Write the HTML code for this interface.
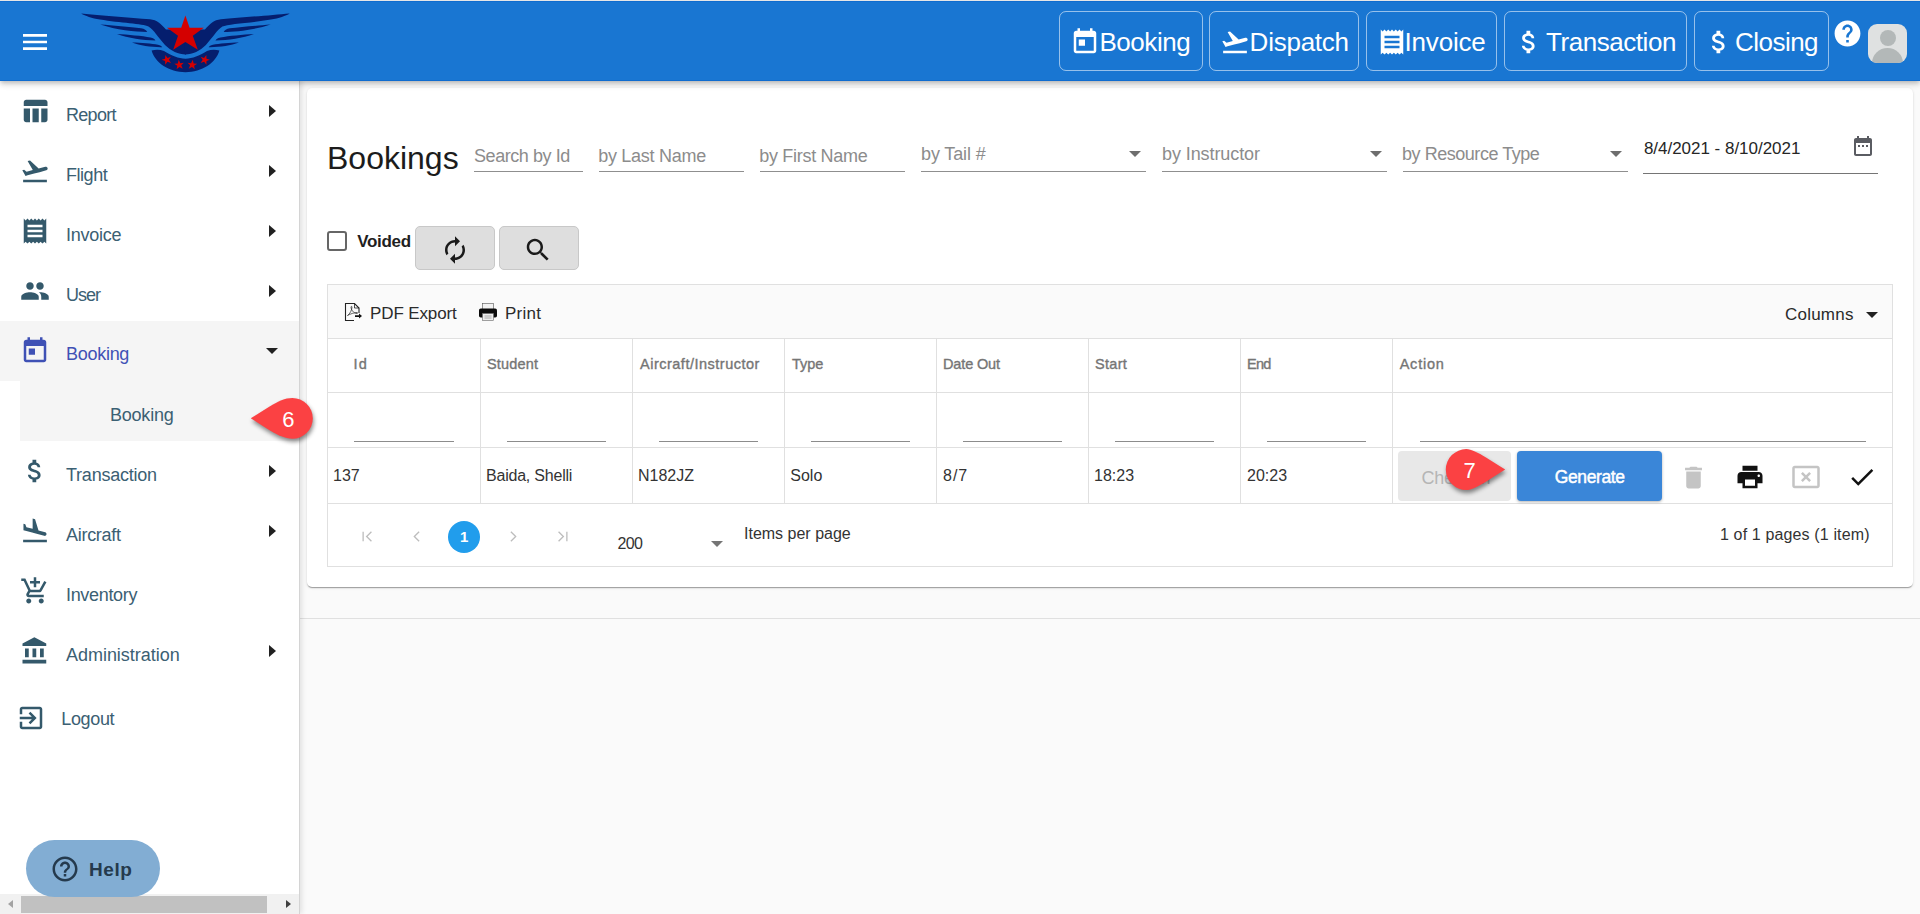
<!DOCTYPE html>
<html lang="en">
<head>
<meta charset="utf-8">
<title>Bookings</title>
<style>
*{box-sizing:border-box;margin:0;padding:0}
html,body{width:1920px;height:914px;overflow:hidden;background:#fafafa;font-family:"Liberation Sans",sans-serif;color:#212121}
.abs{position:absolute}
.t{position:absolute;white-space:nowrap;line-height:1}
svg{position:absolute;display:block;overflow:visible}
/* header */
#hdr{position:absolute;left:0;top:0;width:1920px;height:81px;background:#1976d2;border-top:1px solid #e6e6e6;box-shadow:0 2px 4px -1px rgba(0,0,0,.16),0 4px 5px 0 rgba(0,0,0,.10),0 1px 10px 0 rgba(0,0,0,.09);z-index:5}
.nb{position:absolute;top:11px;height:60px;border:1px solid rgba(255,255,255,.55);border-radius:7px}
.nb .t{color:#fff;font-size:26px;top:17px}
/* sidebar */
#side{position:absolute;left:0;top:80px;width:300px;height:834px;background:#fff;border-right:1px solid #d4d4d4;box-shadow:2px 0 5px rgba(0,0,0,.10);z-index:2}
.mi{position:absolute;left:0;width:299px;height:60px}
.mi .t{left:66px;top:22px;font-size:18px;color:#3b6073}
.mi svg.ic{left:20px;top:12px;width:30px;height:30px;fill:#34596b}
.mi .ar{position:absolute;left:269px;top:21px;width:0;height:0;border-left:7px solid #212121;border-top:6px solid transparent;border-bottom:6px solid transparent}
/* card */
#card{position:absolute;left:307px;top:88px;width:1606px;height:499px;background:#fff;border-radius:5px;box-shadow:0 2px 1px -1px rgba(0,0,0,.2),0 1px 1px 0 rgba(0,0,0,.14),0 1px 3px 0 rgba(0,0,0,.12)}
.ph{color:#8c8c8c;font-size:18px}
.ul{position:absolute;height:1px;background:#8f8f8f}
.dd{position:absolute;width:0;height:0;border-top:6px solid #6e6e6e;border-left:6px solid transparent;border-right:6px solid transparent}
</style>
</head>
<body>
<!-- HEADER -->
<div id="hdr"><div class="abs" style="left:0;top:-1px;width:1920px;height:81px"><div class="abs" style="left:0;top:1px;width:1920px;height:1px;background:#0f6ccf"></div><div class="abs" style="left:0;top:80px;width:1920px;height:1px;background:#0f6ccf"></div>
  <svg style="left:19px;top:26px" width="32" height="32" viewBox="0 0 24 24" fill="#fff"><path d="M3 18h18v-2H3v2zm0-5h18v-2H3v2zm0-7v2h18V6H3z"/></svg>
  <svg style="left:0;top:0" width="300" height="80" viewBox="0 0 300 80">
    <g fill="#051e6e">
      <path d="M81.2 13.4 C100 15.2 130 17.6 150 19.2 C157 19.8 161 24 166 29.5 L186 29.5 L186 54.600 C178 54.2 171 51 165 45 C158 37.5 154 30 148.5 26.6 C143 23.8 120 23 100 19.6 C92 18 85 15.8 81.2 13.4Z"/>
      <path d="M100.3 24.5 C112 25.4 130 27 141 28.2 C144.5 28.8 146.5 30.4 147.2 32 C135 31.8 116 29.8 100.3 24.5Z"/>
      <path d="M117 34 C128 34.6 142 36 150.5 37.4 C153.4 38 154.8 39.2 155.4 40.4 C143 40.4 128 38.2 117 34Z"/>
      <path d="M132 42.6 C141 42.8 152 43.8 158 44.8 C160.4 45.4 161.6 46.2 162.2 47.2 C152 47.4 140 45.6 132 42.6Z"/>
    </g>
    <g fill="#051e6e" transform="translate(370.9 0) scale(-1 1)">
      <path d="M81.2 13.4 C100 15.2 130 17.6 150 19.2 C157 19.8 161 24 166 29.5 L186 29.5 L186 54.600 C178 54.2 171 51 165 45 C158 37.5 154 30 148.5 26.6 C143 23.8 120 23 100 19.6 C92 18 85 15.8 81.2 13.4Z"/>
      <path d="M100.3 24.5 C112 25.4 130 27 141 28.2 C144.5 28.8 146.5 30.4 147.2 32 C135 31.8 116 29.8 100.3 24.5Z"/>
      <path d="M117 34 C128 34.6 142 36 150.5 37.4 C153.4 38 154.8 39.2 155.4 40.4 C143 40.4 128 38.2 117 34Z"/>
      <path d="M132 42.6 C141 42.8 152 43.8 158 44.8 C160.4 45.4 161.6 46.2 162.2 47.2 C152 47.4 140 45.6 132 42.6Z"/>
    </g>
    <path fill="#051e6e" d="M151.6 50.6 C156 49.2 160 49.6 164 51 C172 55.800 178 58.500 185.500 58.700 C193 58.500 199 55.800 207 51 C211 49.6 215 49.2 219.4 50.6 C216 63 202 72.2 185.5 72.2 C169 72.2 155 63 151.6 50.6Z"/>
    <path fill="#d40000" d="M185.4 15.6 L189.6 27.8 L203.8 27.8 L192.800 35.800 L197.800 49.800 L185.400 42 L173.200 49.800 L178 35.800 L167 27.800 L181.2 27.8Z"/>
    <g fill="#d40000">
      <path d="M0 -4.2 L1.1 -1.3 L4.1 -1.3 L1.7 .6 L2.6 3.6 L0 1.8 L-2.6 3.6 L-1.7 .6 L-4.1 -1.3 L-1.1 -1.3Z" transform="translate(166.8 59.8) rotate(-18) scale(1.18)"/>
      <path d="M0 -4.2 L1.1 -1.3 L4.1 -1.3 L1.7 .6 L2.6 3.6 L0 1.8 L-2.6 3.6 L-1.7 .6 L-4.1 -1.3 L-1.1 -1.3Z" transform="translate(179.2 64.8) rotate(-6) scale(1.18)"/>
      <path d="M0 -4.2 L1.1 -1.3 L4.1 -1.3 L1.7 .6 L2.6 3.6 L0 1.8 L-2.6 3.6 L-1.7 .6 L-4.1 -1.3 L-1.1 -1.3Z" transform="translate(192.2 64.8) rotate(6) scale(1.18)"/>
      <path d="M0 -4.2 L1.1 -1.3 L4.1 -1.3 L1.7 .6 L2.6 3.6 L0 1.8 L-2.6 3.6 L-1.7 .6 L-4.1 -1.3 L-1.1 -1.3Z" transform="translate(204.8 59.8) rotate(18) scale(1.18)"/>
    </g>
  </svg>
  <div class="nb" style="left:1059px;width:144px">
    <svg style="left:10px;top:15px" width="30" height="30" viewBox="0 0 24 24" fill="#fff"><path d="M19 3h-1V1h-2v2H8V1H6v2H5c-1.11 0-1.990.9-1.990 2L3 19c0 1.100.890 2 2 2h14c1.100 0 2-.9 2-2V5c0-1.100-.9-2-2-2zm0 16H5V8h14v11zM7 10h5v5H7z"/></svg>
    <span class="t" id="nb1" style="left:39.4px;letter-spacing:-0.43px">Booking</span></div>
  <div class="nb" style="left:1209px;width:150px">
    <svg style="left:10px;top:15px" width="30" height="30" viewBox="0 0 24 24" fill="#fff"><path d="M2.5 19h19v2h-19zm19.570-9.360c-.21-.8-1.040-1.280-1.840-1.060L14.920 10l-6.900-6.430-1.930.51 4.140 7.170-4.970 1.330-1.970-1.540-1.450.39 1.820 3.160.77 1.330 1.600-.43 5.310-1.420 4.350-1.160L21 11.490c.81-.23 1.280-1.050 1.070-1.850z"/></svg>
    <span class="t" id="nb2" style="left:39.6px;letter-spacing:-0.24px">Dispatch</span></div>
  <div class="nb" style="left:1366px;width:131px">
    <svg style="left:10px;top:15px" width="30" height="30" viewBox="0 0 24 24" fill="#fff"><path d="M18 17H6v-2h12v2zm0-4H6v-2h12v2zm0-4H6V7h12v2zM3 22l1.500-1.500L6 22l1.500-1.500L9 22l1.500-1.500L12 22l1.500-1.500L15 22l1.500-1.500L18 22l1.500-1.500L21 22V2l-1.500 1.500L18 2l-1.500 1.500L15 2l-1.500 1.500L12 2l-1.500 1.500L9 2 7.500 3.500 6 2 4.500 3.500 3 2v20z"/></svg>
    <span class="t" id="nb3" style="left:37.6px;letter-spacing:-0.21px">Invoice</span></div>
  <div class="nb" style="left:1504px;width:183px">
    <svg style="left:9.400px;top:15.200px" width="30" height="30" viewBox="0 0 24 24" fill="#fff"><path d="M11.800 10.900c-2.270-.59-3-1.200-3-2.150 0-1.090 1.010-1.850 2.700-1.850 1.780 0 2.440.85 2.500 2.100h2.210c-.07-1.720-1.120-3.300-3.210-3.810V3h-3v2.160c-1.940.42-3.500 1.680-3.500 3.610 0 2.310 1.910 3.460 4.700 4.130 2.500.6 3 1.480 3 2.410 0 .69-.49 1.790-2.700 1.790-2.060 0-2.870-.92-2.980-2.100h-2.200c.12 2.190 1.760 3.420 3.680 3.830V21h3v-2.150c1.950-.37 3.500-1.500 3.500-3.550 0-2.840-2.430-3.810-4.700-4.400z"/></svg>
    <span class="t" id="nb4" style="left:41.0px;letter-spacing:-0.45px">Transaction</span></div>
  <div class="nb" style="left:1694px;width:135px">
    <svg style="left:9.400px;top:15.200px" width="30" height="30" viewBox="0 0 24 24" fill="#fff"><path d="M11.800 10.900c-2.270-.59-3-1.200-3-2.150 0-1.090 1.010-1.850 2.700-1.850 1.780 0 2.440.85 2.500 2.100h2.210c-.07-1.720-1.120-3.300-3.210-3.810V3h-3v2.160c-1.940.42-3.500 1.680-3.500 3.610 0 2.310 1.910 3.460 4.700 4.130 2.500.6 3 1.480 3 2.410 0 .69-.49 1.790-2.700 1.790-2.060 0-2.870-.92-2.980-2.100h-2.200c.12 2.190 1.760 3.420 3.680 3.830V21h3v-2.150c1.950-.37 3.500-1.500 3.500-3.550 0-2.840-2.430-3.810-4.700-4.400z"/></svg>
    <span class="t" id="nb5" style="left:40px;letter-spacing:-0.53px">Closing</span></div>
  <svg style="left:1832.400px;top:18.400px" width="31" height="31" viewBox="0 0 24 24" fill="#fff"><path d="M12 2C6.480 2 2 6.480 2 12s4.480 10 10 10 10-4.480 10-10S17.520 2 12 2zm1 17h-2v-2h2v2zm2.070-7.750l-.9.92C13.450 12.900 13 13.500 13 15h-2v-.5c0-1.100.45-2.100 1.170-2.830l1.240-1.260c.37-.36.59-.86.59-1.410 0-1.100-.9-2-2-2s-2 .9-2 2H8c0-2.210 1.790-4 4-4s4 1.790 4 4c0 .88-.36 1.680-.93 2.250z"/></svg>
  <div class="abs" style="left:1868px;top:24px;width:39px;height:39px;border-radius:9px;background:#dfe1e1;overflow:hidden">
    <div class="abs" style="left:11.500px;top:6px;width:16px;height:16px;border-radius:50%;background:#b3b8b8"></div>
    <div class="abs" style="left:4px;top:24px;width:31px;height:30px;border-radius:50%;background:#b3b8b8"></div>
  </div>
</div></div>

<!-- SIDEBAR -->
<div id="side">
  <div class="mi" style="top:4px"><svg class="ic" viewBox="0 0 24 24"><path d="M10 10.020h5V21h-5zM17 21h3c1.100 0 2-.9 2-2v-9h-5v11zm3-18H5c-1.100 0-2 .9-2 2v3h19V5c0-1.100-.9-2-2-2zM3 19c0 1.100.9 2 2 2h3V10H3v9z"/></svg><span class="t" id="m0" style="left:66px;letter-spacing:-0.70px">Report</span><div class="ar"></div></div>
  <div class="mi" style="top:64px"><svg class="ic" viewBox="0 0 24 24"><path d="M2.5 19h19v2h-19zm19.570-9.360c-.21-.8-1.040-1.280-1.840-1.060L14.920 10l-6.900-6.430-1.930.51 4.140 7.170-4.970 1.330-1.970-1.540-1.450.39 1.820 3.160.77 1.330 1.600-.43 5.310-1.420 4.350-1.160L21 11.490c.81-.23 1.280-1.050 1.070-1.850z"/></svg><span class="t" id="m1" style="left:66px;letter-spacing:-0.46px">Flight</span><div class="ar"></div></div>
  <div class="mi" style="top:124px"><svg class="ic" viewBox="0 0 24 24"><path d="M18 17H6v-2h12v2zm0-4H6v-2h12v2zm0-4H6V7h12v2zM3 22l1.500-1.500L6 22l1.500-1.500L9 22l1.500-1.500L12 22l1.500-1.500L15 22l1.500-1.500L18 22l1.500-1.500L21 22V2l-1.500 1.500L18 2l-1.500 1.500L15 2l-1.500 1.500L12 2l-1.500 1.500L9 2 7.500 3.500 6 2 4.500 3.500 3 2v20z"/></svg><span class="t" id="m2" style="left:66px;letter-spacing:-0.27px">Invoice</span><div class="ar"></div></div>
  <div class="mi" style="top:184px"><svg class="ic" viewBox="0 0 24 24"><path d="M16 11c1.660 0 2.990-1.340 2.990-3S17.660 5 16 5c-1.660 0-3 1.340-3 3s1.340 3 3 3zm-8 0c1.660 0 2.990-1.340 2.990-3S9.660 5 8 5C6.340 5 5 6.340 5 8s1.340 3 3 3zm0 2c-2.330 0-7 1.170-7 3.500V19h14v-2.500c0-2.330-4.670-3.500-7-3.500zm8 0c-.29 0-.62.020-.97.050 1.160.84 1.970 1.970 1.970 3.450V19h6v-2.500c0-2.330-4.670-3.500-7-3.500z"/></svg><span class="t" id="m3" style="left:66px;letter-spacing:-0.97px">User</span><div class="ar"></div></div>
  <div class="mi" style="top:244px;background:#f5f5f5;top:241px;height:60px"><svg class="ic" style="fill:#3f51b5;top:15px" viewBox="0 0 24 24"><path d="M19 3h-1V1h-2v2H8V1H6v2H5c-1.110 0-1.990.9-1.990 2L3 19c0 1.100.890 2 2 2h14c1.100 0 2-.9 2-2V5c0-1.100-.9-2-2-2zm0 16H5V8h14v11zM7 10h5v5H7z"/></svg><span class="t" id="m4" style="color:#3f51b5;top:24px;letter-spacing:-0.28px">Booking</span><div class="abs" style="left:266px;top:27px;width:0;height:0;border-top:6px solid #212121;border-left:6px solid transparent;border-right:6px solid transparent"></div></div>
  <div class="mi" style="top:364px"><svg class="ic" viewBox="0 0 24 24"><path d="M11.800 10.900c-2.270-.59-3-1.200-3-2.150 0-1.090 1.010-1.850 2.700-1.850 1.780 0 2.440.85 2.500 2.100h2.210c-.07-1.720-1.120-3.300-3.210-3.810V3h-3v2.160c-1.940.42-3.500 1.680-3.500 3.610 0 2.310 1.910 3.460 4.700 4.130 2.500.6 3 1.480 3 2.410 0 .69-.49 1.790-2.700 1.790-2.060 0-2.870-.92-2.980-2.100h-2.200c.12 2.190 1.760 3.420 3.680 3.830V21h3v-2.150c1.950-.37 3.500-1.500 3.500-3.550 0-2.840-2.430-3.810-4.700-4.400z"/></svg><span class="t" id="m5" style="left:66px;letter-spacing:-0.23px">Transaction</span><div class="ar"></div></div>
  <div class="mi" style="top:424px"><svg class="ic" viewBox="0 0 24 24"><path d="M2.500 19h19v2h-19zm7.180-5.730l4.350 1.160 5.310 1.420c.8.21 1.620-.26 1.840-1.060.21-.8-.26-1.620-1.060-1.840l-5.310-1.420-2.760-9.020L10.120 2v8.280L5.150 8.950l-.93-2.320-1.450-.39v5.170l1.600.43 5.310 1.430z"/></svg><span class="t" id="m6" style="left:66px;letter-spacing:-0.29px">Aircraft</span><div class="ar"></div></div>
  <div class="mi" style="top:484px"><svg class="ic" viewBox="0 0 24 24"><path d="M11 9h2V6h3V4h-3V1h-2v3H8v2h3v3zm-4 9c-1.100 0-1.990.9-1.990 2S5.900 22 7 22s2-.9 2-2-.9-2-2-2zm10 0c-1.100 0-1.990.9-1.990 2s.89 2 1.990 2 2-.9 2-2-.9-2-2-2zm-9.830-3.250l.03-.12.9-1.630h7.450c.75 0 1.410-.41 1.750-1.030l3.860-7.010L19.420 4h-.01l-1.100 2-2.760 5H8.530l-.13-.27L6.160 6l-.95-2-.94-2H1v2h2l3.600 7.590-1.350 2.450c-.16.28-.25.61-.25.960 0 1.100.9 2 2 2h12v-2H7.420c-.13 0-.25-.11-.25-.25z"/></svg><span class="t" id="m7" style="left:66px;letter-spacing:-0.32px">Inventory</span></div>
  <div class="mi" style="top:544px"><svg class="ic" viewBox="0 0 24 24"><path d="M4 10v7h3v-7H4zm6 0v7h3v-7h-3zM2 22h19v-3H2v3zm14-12v7h3v-7h-3zm-4.500-9L2 6v2h19V6l-9.500-5z"/></svg><span class="t" id="m8" style="left:66px;letter-spacing:-0.03px">Administration</span><div class="ar"></div></div>
  <div class="abs" style="left:20px;top:301px;width:279px;height:60px;background:#f5f5f5"><span class="t" id="msub" style="left:90.0px;top:25px;font-size:18px;color:#3b6073;letter-spacing:-0.22px">Booking</span></div>
  <div class="mi" style="top:608px"><svg class="ic" style="left:16px;top:15px" viewBox="0 0 24 24"><path d="M10.090 15.590L11.500 17l5-5-5-5-1.410 1.410L12.670 11H3v2h9.670l-2.580 2.590zM19 3H5c-1.110 0-2 .9-2 2v4h2V5h14v14H5v-4H3v4c0 1.100.89 2 2 2h14c1.100 0 2-.9 2-2V5c0-1.100-.9-2-2-2z"/></svg><span class="t" id="mlog" style="left:61.3px;letter-spacing:-0.36px">Logout</span></div>
  <div class="abs" style="left:26px;top:760px;width:134px;height:57px;border-radius:29px;background:#82add3;z-index:4">
    <svg style="left:24.400px;top:13.700px" width="30" height="30" viewBox="0 0 24 24" fill="#253a4d"><path d="M11 18h2v-2h-2v2zm1-16C6.480 2 2 6.480 2 12s4.480 10 10 10 10-4.480 10-10S17.520 2 12 2zm0 18c-4.410 0-8-3.590-8-8s3.590-8 8-8 8 3.590 8 8-3.590 8-8 8zm0-14c-2.210 0-4 1.790-4 4h2c0-1.100.9-2 2-2s2 .9 2 2c0 2-3 1.750-3 5h2c0-2.250 3-2.500 3-5 0-2.210-1.790-4-4-4z"/></svg>
    <span class="t" id="help" style="left:63px;top:20px;font-size:19px;font-weight:bold;color:#253a4d;letter-spacing:.6px">Help</span></div>
  <div class="abs" style="left:0;top:814px;width:299px;height:20px;background:#f1f1f1;z-index:3">
    <div class="abs" style="left:21px;top:2px;width:246px;height:17px;background:#c1c1c1"></div>
    <div class="abs" style="left:8px;top:6px;width:0;height:0;border-right:5px solid #a3a3a3;border-top:4px solid transparent;border-bottom:4px solid transparent"></div>
    <div class="abs" style="left:286px;top:6px;width:0;height:0;border-left:5px solid #404040;border-top:4px solid transparent;border-bottom:4px solid transparent"></div>
  </div>
</div>

<!-- MAIN -->
<div class="abs" style="left:300px;top:618px;width:1620px;height:1px;background:#e0e0e0"></div>
<div id="card"></div>
<span class="t" id="ttl" style="left:327px;top:142px;font-size:32px;color:#1c1c1c">Bookings</span>
<span class="t ph" id="f1" style="left:474px;top:147px;letter-spacing:-0.43px">Search by Id</span><div class="ul" style="left:474px;top:171px;width:109px"></div>
<span class="t ph" id="f2" style="left:598.2px;top:147px;letter-spacing:-0.28px">by Last Name</span><div class="ul" style="left:599px;top:171px;width:145px"></div>
<span class="t ph" id="f3" style="left:759.2px;top:147px;letter-spacing:-0.29px">by First Name</span><div class="ul" style="left:760px;top:171px;width:145px"></div>
<span class="t ph" id="f4" style="left:921px;top:145px;letter-spacing:-0.12px">by Tail #</span><div class="ul" style="left:921px;top:171px;width:225px"></div>
<div class="dd" style="left:1129px;top:151px"></div>
<span class="t ph" id="f5" style="left:1162px;top:145px;letter-spacing:-0.09px">by Instructor</span><div class="ul" style="left:1162px;top:171px;width:225px"></div>
<div class="dd" style="left:1370px;top:151px"></div>
<span class="t ph" id="f6" style="left:1402.0px;top:145px;letter-spacing:-0.46px">by Resource Type</span><div class="ul" style="left:1403px;top:171px;width:225px"></div>
<div class="dd" style="left:1610px;top:151px"></div>
<span class="t" id="f7" style="left:1643.9px;top:140px;font-size:17px;color:#262626;letter-spacing:-0.02px">8/4/2021 - 8/10/2021</span><div class="ul" style="left:1643px;top:173px;width:235px;background:#757575"></div>
<svg style="left:1851px;top:134px" width="24" height="24" viewBox="0 0 24 24" fill="#5a5c62"><path d="M9 11H7v2h2v-2zm4 0h-2v2h2v-2zm4 0h-2v2h2v-2zm2-7h-1V2h-2v2H8V2H6v2H5c-1.110 0-1.990.9-1.990 2L3 20c0 1.100.89 2 2 2h14c1.100 0 2-.9 2-2V6c0-1.100-.9-2-2-2zm0 16H5V9h14v11z"/></svg>
<div class="abs" style="left:327px;top:231px;width:20px;height:20px;border:2px solid #666;border-radius:3px;background:#fff"></div>
<span class="t" id="void" style="left:357.2px;top:232.500px;font-size:17px;font-weight:bold;color:#1f1f1f;letter-spacing:-0.30px">Voided</span>
<div class="abs" style="left:415px;top:226px;width:80px;height:44px;background:#dedede;border:1px solid #c8c8c8;border-radius:5px"><svg style="left:23.700px;top:7.800px" width="30" height="30" viewBox="0 0 24 24" fill="#1a1a1a"><path d="M12 6v3l4-4-4-4v3c-4.420 0-8 3.580-8 8 0 1.570.46 3.030 1.240 4.260L6.700 14.800c-.45-.83-.7-1.790-.7-2.800 0-3.310 2.690-6 6-6zm6.760 1.740L17.300 9.200c.44.84.7 1.790.7 2.800 0 3.310-2.690 6-6 6v-3l-4 4 4 4v-3c4.420 0 8-3.580 8-8 0-1.570-.46-3.030-1.240-4.260z"/></svg></div>
<div class="abs" style="left:499px;top:226px;width:80px;height:44px;background:#dedede;border:1px solid #c8c8c8;border-radius:5px"><svg style="left:23.300px;top:8.300px" width="30" height="30" viewBox="0 0 24 24" fill="#1a1a1a"><path d="M15.500 14h-.79l-.28-.27C15.410 12.590 16 11.110 16 9.500 16 5.910 13.090 3 9.500 3S3 5.910 3 9.500 5.910 16 9.500 16c1.610 0 3.090-.59 4.230-1.570l.27.28v.79l5 4.990L20.490 19l-4.990-5zm-6 0C7.010 14 5 11.990 5 9.500S7.010 5 9.500 5 14 7.010 14 9.500 11.990 14 9.500 14z"/></svg></div>
<div class="abs" id="grid" style="left:327px;top:284px;width:1566px;height:283px;border:1px solid #e0e0e0;background:#fff"></div>
<div class="abs" style="left:328px;top:285px;width:1564px;height:53px;background:#fafafa"></div>
<div class="abs" style="left:328px;top:338px;width:1564px;height:1px;background:#e0e0e0"></div>
<div class="abs" style="left:328px;top:392px;width:1564px;height:1px;background:#e0e0e0"></div>
<div class="abs" style="left:328px;top:447px;width:1564px;height:1px;background:#e0e0e0"></div>
<div class="abs" style="left:328px;top:503px;width:1564px;height:1px;background:#e0e0e0"></div>
<div class="abs" style="left:480px;top:339px;width:1px;height:164px;background:#e0e0e0"></div>
<div class="abs" style="left:632px;top:339px;width:1px;height:164px;background:#e0e0e0"></div>
<div class="abs" style="left:784px;top:339px;width:1px;height:164px;background:#e0e0e0"></div>
<div class="abs" style="left:936px;top:339px;width:1px;height:164px;background:#e0e0e0"></div>
<div class="abs" style="left:1088px;top:339px;width:1px;height:164px;background:#e0e0e0"></div>
<div class="abs" style="left:1240px;top:339px;width:1px;height:164px;background:#e0e0e0"></div>
<div class="abs" style="left:1392px;top:339px;width:1px;height:164px;background:#e0e0e0"></div>
<svg style="left:343px;top:301px" width="22" height="22" viewBox="0 0 22 22" fill="none" stroke="#222" stroke-width="1.100"><path d="M11 19.500H2.500V2.500h9l4.500 4.500v5"/><path d="M11.500 2.500V7H16" stroke-width=".8"/><path d="M4.500 14.500c2.500-1.500 4.500-6 4.500-8.500 0-.8-1-.8-1 0 0 2.500 2.500 6.500 6 6.500 .8 0 .8-1 0-1-2.500 0-7 1.500-9.500 3z" stroke-width=".7"/><path d="M12 14.300h4v-1.700l3 2.500-3 2.500v-1.700h-4z" fill="#111" stroke="none"/></svg>
<svg style="left:478px;top:302px" width="20" height="20" viewBox="0 0 20 20"><rect x="4.500" y="1.500" width="11" height="6" fill="#f2f2f2" stroke="#555" stroke-width=".6"/><rect x="1" y="6.500" width="18" height="9" rx="1.800" fill="#0a0a0a"/><rect x="4.500" y="11.500" width="11" height="7" fill="#ececec" stroke="#666" stroke-width=".6"/><path d="M6.500 14h7M6.500 16h7" stroke="#999" stroke-width=".8"/></svg>
<span class="t" id="tb1" style="left:370px;top:304.500px;font-size:17px;color:#2b2b2b;letter-spacing:-0.12px">PDF Export</span>
<span class="t" id="tb2" style="left:505px;top:304.500px;font-size:17px;color:#2b2b2b;letter-spacing:0.25px">Print</span>
<span class="t" id="tb3" style="left:1785px;top:306px;font-size:17px;color:#2b2b2b;letter-spacing:0.22px">Columns</span>
<div class="dd" style="left:1866px;top:312px;border-top-color:#212121"></div>
<span class="t" id="h0" style="left:353.5px;top:357px;font-size:14.500px;-webkit-text-stroke:.35px #757575;color:#757575;letter-spacing:1.25px">Id</span>
<span class="t" id="h1" style="left:487px;top:357px;font-size:14.500px;-webkit-text-stroke:.35px #757575;color:#757575;letter-spacing:0.16px">Student</span>
<span class="t" id="h2" style="left:640.0px;top:357px;font-size:14.500px;-webkit-text-stroke:.35px #757575;color:#757575;letter-spacing:0.50px">Aircraft/Instructor</span>
<span class="t" id="h3" style="left:792.0px;top:357px;font-size:14.500px;-webkit-text-stroke:.35px #757575;color:#757575">Type</span>
<span class="t" id="h4" style="left:943px;top:357px;font-size:14.500px;-webkit-text-stroke:.35px #757575;color:#757575;letter-spacing:-0.14px">Date Out</span>
<span class="t" id="h5" style="left:1095px;top:357px;font-size:14.500px;-webkit-text-stroke:.35px #757575;color:#757575;letter-spacing:0.32px">Start</span>
<span class="t" id="h6" style="left:1247px;top:357px;font-size:14.500px;-webkit-text-stroke:.35px #757575;color:#757575;letter-spacing:-0.70px">End</span>
<span class="t" id="h7" style="left:1399.7px;top:357px;font-size:14.500px;-webkit-text-stroke:.35px #757575;color:#757575;letter-spacing:0.76px">Action</span>
<div class="ul" style="left:354px;top:441px;width:100px;background:#8c8c8c"></div>
<div class="ul" style="left:507px;top:441px;width:99px;background:#8c8c8c"></div>
<div class="ul" style="left:659px;top:441px;width:99px;background:#8c8c8c"></div>
<div class="ul" style="left:811px;top:441px;width:99px;background:#8c8c8c"></div>
<div class="ul" style="left:963px;top:441px;width:99px;background:#8c8c8c"></div>
<div class="ul" style="left:1115px;top:441px;width:99px;background:#8c8c8c"></div>
<div class="ul" style="left:1267px;top:441px;width:99px;background:#8c8c8c"></div>
<div class="ul" style="left:1420px;top:441px;width:446px;background:#8c8c8c"></div>
<span class="t" id="d0" style="left:333px;top:468px;font-size:16px;color:#333">137</span>
<span class="t" id="d1" style="left:486.0px;top:468px;font-size:16px;color:#333;letter-spacing:-0.21px">Baida, Shelli</span>
<span class="t" id="d2" style="left:638.0px;top:468px;font-size:16px;color:#333">N182JZ</span>
<span class="t" id="d3" style="left:790.3px;top:468px;font-size:16px;color:#333">Solo</span>
<span class="t" id="d4" style="left:943px;top:468px;font-size:16px;color:#333;letter-spacing:1.00px">8/7</span>
<span class="t" id="d5" style="left:1094.0px;top:468px;font-size:16px;color:#333">18:23</span>
<span class="t" id="d6" style="left:1247px;top:468px;font-size:16px;color:#333">20:23</span>
<div class="abs" style="left:1398px;top:451px;width:113px;height:50px;background:#e8e8e8;border-radius:4px"><span class="t" id="chk" style="left:23.500px;top:18px;font-size:18px;color:#b5b5b5;letter-spacing:-.3px">Check In</span></div>
<div class="abs" style="left:1517px;top:451px;width:145px;height:50px;background:#3a86d8;border-radius:4px;box-shadow:0 1px 3px rgba(0,0,0,.3)"><span class="t" id="gen" style="left:37.8px;top:18.300px;font-size:17.500px;-webkit-text-stroke:.45px #fff;color:#fff;letter-spacing:-0.40px">Generate</span></div>
<svg style="left:1679px;top:462.500px" width="29" height="29" viewBox="0 0 24 24" fill="#c4c4c4"><path d="M6 19c0 1.100.9 2 2 2h8c1.100 0 2-.9 2-2V7H6v12zM19 4h-3.500l-1-1h-5l-1 1H5v2h14V4z"/></svg>
<svg style="left:1734.500px;top:462px" width="30" height="30" viewBox="0 0 24 24" fill="#111"><path d="M19 8H5c-1.660 0-3 1.340-3 3v6h4v4h12v-4h4v-6c0-1.660-1.340-3-3-3zm-3 11H8v-5h8v5zm3-7c-.55 0-1-.45-1-1s.45-1 1-1 1 .45 1 1-.45 1-1 1zm-1-9H6v4h12V3z"/></svg>
<svg style="left:1790.700px;top:462px" width="30" height="30" viewBox="0 0 24 24" fill="#c4c4c4"><path d="M21 3H3c-1.100 0-2 .9-2 2v14c0 1.100.9 2 2 2h18c1.100 0 2-.9 2-2V5c0-1.100-.9-2-2-2zm0 16.020H3V4.980h18v14.040zM9.410 16L12 13.410 14.590 16 16 14.590 13.410 12 16 9.410 14.590 8 12 10.590 9.410 8 8 9.410 10.590 12 8 14.590z"/></svg>
<svg style="left:1847.200px;top:462px" width="30" height="30" viewBox="0 0 24 24" fill="#111"><path d="M9 16.170L4.830 12l-1.420 1.410L9 19 21 7l-1.410-1.410z"/></svg>
<svg style="left:357px;top:525.900px" width="21" height="21" viewBox="0 0 24 24" fill="none" stroke="#bdbdbd" stroke-width="1.500"><path d="M7 6.500v11M16.500 6.500L11 12l5.500 5.500"/></svg>
<svg style="left:405.800px;top:525.900px" width="21" height="21" viewBox="0 0 24 24" fill="none" stroke="#bdbdbd" stroke-width="1.500"><path d="M15 6.500L9.500 12l5.500 5.500"/></svg>
<div class="abs" style="left:448px;top:520.500px;width:32px;height:32px;border-radius:50%;background:#219dec"><span class="t" id="pg1" style="left:12px;top:8.500px;font-size:15px;font-weight:bold;color:#fff">1</span></div>
<svg style="left:503.100px;top:525.900px" width="21" height="21" viewBox="0 0 24 24" fill="none" stroke="#bdbdbd" stroke-width="1.500"><path d="M9 6.500L14.500 12 9 17.500"/></svg>
<svg style="left:551.600px;top:525.900px" width="21" height="21" viewBox="0 0 24 24" fill="none" stroke="#bdbdbd" stroke-width="1.500"><path d="M17 6.500v11M7.500 6.500L13 12l-5.500 5.500"/></svg>
<span class="t" id="pg2" style="left:617.6px;top:536px;font-size:16px;color:#333;letter-spacing:-0.70px">200</span>
<div class="dd" style="left:711px;top:541px;border-top-width:6.500px;border-left-width:6.500px;border-right-width:6.500px;border-top-color:#757575"></div>
<span class="t" id="pg3" style="left:744px;top:525.500px;font-size:16px;color:#333">Items per page</span>
<span class="t" id="pg4" style="left:1720px;top:526.500px;font-size:16px;color:#333;letter-spacing:0.14px">1 of 1 pages (1 item)</span>
<svg style="left:0;top:0;z-index:9;filter:drop-shadow(1px 3px 2px rgba(0,0,0,.45))" width="1920" height="914" viewBox="0 0 1920 914">
  <path fill="#fb4143" d="M250.8 418.3 Q262 411.200 270 406.200 C278 401.500 285 398 292.400 398 A20.400 20.400 0 1 1 292.400 438.800 C285 438.800 278 435.300 270 430.600 Q262 425.600 250.800 418.300Z"/>
  <path fill="#fb4143" d="M1505.2 469.600 Q1494 462.500 1486 457.500 C1478 452.800 1471 449.100 1466.300 449.100 A20.500 20.500 0 1 0 1466.300 490.100 C1471 490.100 1478 486.400 1486 481.700 Q1494 476.700 1505.200 469.600Z"/>
</svg>
<span class="t" id="mk6" style="left:282.300px;top:409px;font-size:22px;color:#fff;z-index:10">6</span>
<span class="t" id="mk7" style="left:1463.500px;top:460px;font-size:22px;color:#fff;z-index:10">7</span>
</body>
</html>
